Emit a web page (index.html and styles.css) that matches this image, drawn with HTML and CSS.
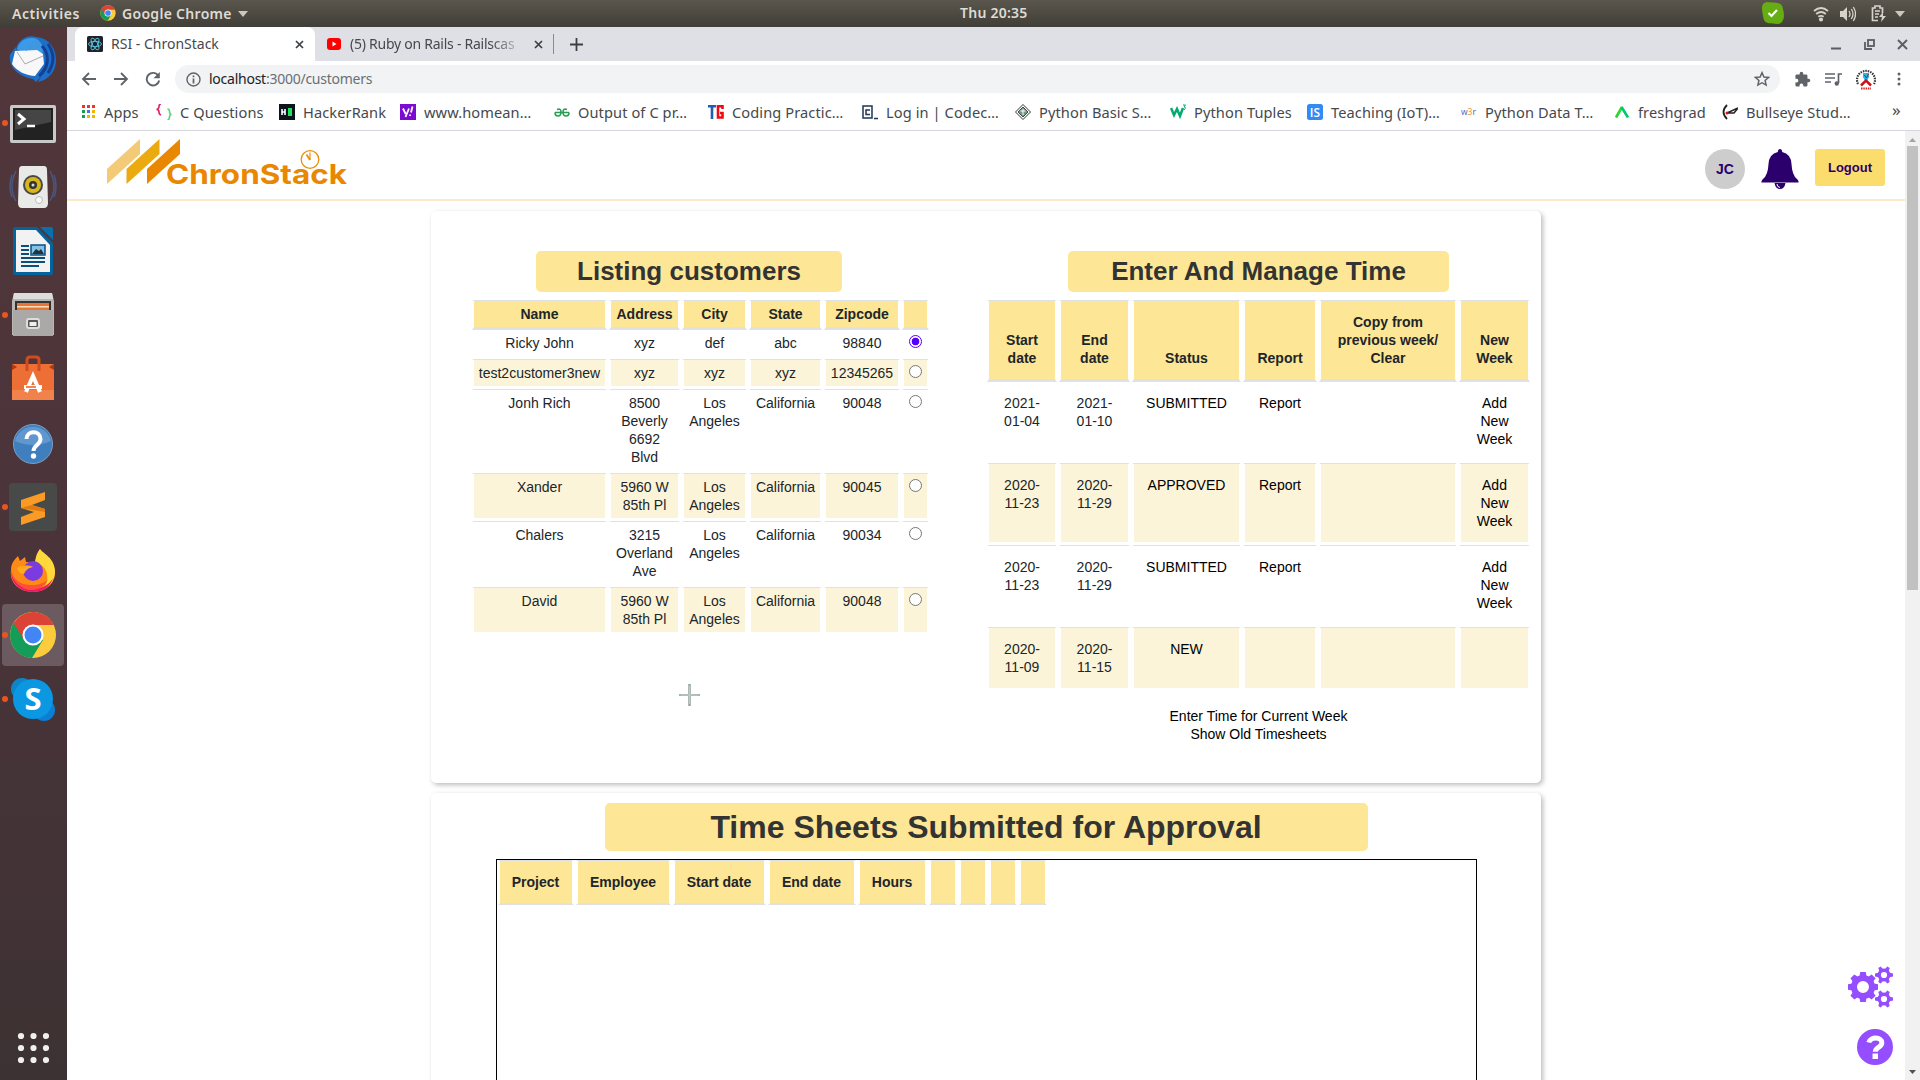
FILE: index.html
```html
<!DOCTYPE html>
<html lang="en">
<head>
<meta charset="utf-8">
<title>RSI - ChronStack</title>
<link rel="stylesheet" href="styles.css">
</head>
<body>
<header class="topbar">
  <span class="activities">Activities</span>
  <svg class="tb-chrome" width="16" height="16" viewBox="0 0 48 48"><use href="#chrome"/></svg>
  <span class="appname">Google Chrome</span>
  <svg class="tb-caret" width="10" height="6"><path d="M0 0h10L5 6z" fill="#c9c7c0"/></svg>
  <span class="clock">Thu 20:35</span>
  <div class="tray">
    <svg width="22" height="27" viewBox="0 0 22 27"><path d="M5 2C12 3 20 1 21 9c2 7 1 14-5 15C8 23 2 25 1 16 0 10-2 3 5 2z" fill="#65ad12"/><path d="M6.500 13l3 3 5.500-6" fill="none" stroke="#fff" stroke-width="2.200"/></svg>
    <svg class="t-wifi" width="16" height="16" viewBox="0 0 16 16" fill="none" stroke="#d5d2cb" stroke-width="1.800"><path d="M1 5q7-6 14 0M3.200 8q4.800-4 9.600 0M5.300 10.800q2.700-2 5.400 0"/><circle cx="8" cy="13.500" r="1.200" fill="#d5d2cb"/></svg>
    <svg class="t-vol" width="16" height="16" viewBox="0 0 16 16"><path d="M0 5h3l4-4v14l-4-4H0z" fill="#d5d2cb"/><path d="M9 5q2 3 0 6M11.300 3q3.400 5 0 10M13.300 1q4.500 7 0 14" fill="none" stroke="#d5d2cb" stroke-width="1.300"/></svg>
    <svg class="t-bat" width="15" height="17" viewBox="0 0 15 17" fill="none" stroke="#d5d2cb" stroke-width="1.700"><path d="M7 15.500H1.500V3H4V1h5v2h2.500v5M4 6h5M4 9h4M4 12h3"/><path d="M12 7l-4 5h3l-1 5 5-6h-3z" fill="#d5d2cb" stroke="none"/></svg>
    <svg class="t-car" width="10" height="6"><path d="M0 0h10L5 6z" fill="#c9c7c0"/></svg>
  </div>
</header>

<div class="desktop">
<nav class="dock">
  <div class="app"><svg viewBox="0 0 48 48"><path d="M7 16C7 6 18-1 27 2c13 1 20 11 20 23 0 12-8 20-18 22l3-5-5 5-3-3C10 42-1 32 1 20c1-2 3-5 6-8z" fill="#1d6fc7"/><path d="M18 4c8-3 13 1 15 6 2 8 0 15-6 20L8 14C10 8 14 4 18 4z" fill="#3f97e0"/><path d="M33 11c8 8 7 22-3 30M39 9c7 10 6 20 0 29" stroke="#153f92" stroke-width="3" fill="none"/><path d="M6 16l22-1 6 4 1 10-9 12C18 41 7 36 3 29z" fill="#f8f8fa"/><path d="M8 17l8 12 18-8" fill="none" stroke="#aaa" stroke-width="1"/><path d="M10 12c3-9 14-12 20-6-8-1-11 4-12 10z" fill="#3b9be8"/></svg></div>
  <div class="app on"><svg viewBox="0 0 48 48"><rect x="1" y="6" width="46" height="38" rx="2" fill="#c9c9c7"/><rect x="4" y="9" width="40" height="32" fill="#222"/><path d="M6 11h36v12L6 31z" fill="#454545"/><path d="M9 15l6 5-6 5" stroke="#fff" stroke-width="3" fill="none"/><path d="M18 27h8" stroke="#fff" stroke-width="2.500"/></svg></div>
  <div class="app"><svg viewBox="0 0 48 48"><path d="M7 8q-8 16 0 30M3 12q-4 12 0 22M41 8q8 16 0 30M45 12q4 12 0 22" stroke="#4b5680" stroke-width="1.500" fill="none"/><path d="M13 3h22q3 0 3 4l1 33q0 5-4 5H13q-4 0-4-5l1-33q0-4 3-4z" fill="#e9e9e7"/><circle cx="24" cy="22" r="10" fill="#48484a"/><circle cx="24" cy="22" r="8" fill="#d6b71b"/><circle cx="24" cy="22" r="4" fill="#333"/><circle cx="24" cy="22" r="1.500" fill="#ddd"/><circle cx="30" cy="37" r="3.500" fill="#f8f8f8" stroke="#bbb"/></svg></div>
  <div class="app"><svg viewBox="0 0 48 48"><path d="M6 0h22l16 16v30q0 2-2 2H6q-2 0-2-2V2q0-2 2-2z" fill="#05639c"/><path d="M31 0h11q2 0 2 2v11z" fill="#0a6fae"/><path d="M7 3h20l14 15v27H7z" fill="#f2f2f2"/><path d="M12 19h8M12 23h8M12 27h8M12 31h24M12 35h24M12 39h18" stroke="#0b4f7d" stroke-width="2"/><path d="M22 18h14v10H22z" fill="#81c3e8" stroke="#0b4f7d" stroke-width="1.500"/><path d="M23 27l4-5 3 2 2-2 3 5z" fill="#263238"/></svg></div>
  <div class="app on"><svg viewBox="0 0 48 48"><path d="M5 2h38l2 8v34H3V10z" fill="#b7b7b5"/><path d="M5 2h38l1 6H4z" fill="#ddd"/><path d="M6 10h36v10H6z" fill="#333"/><path d="M8 12h32v7H8z" fill="#e87533"/><path d="M8 15h32v1.500H8z" fill="#fbe0c0"/><path d="M4 19h40v26H4z" fill="#aaa9a8"/><rect x="18" y="28" width="12" height="9" rx="2" fill="#555" stroke="#ddd" stroke-width="2"/><rect x="20.500" y="31" width="7" height="4" fill="#eee"/></svg></div>
  <div class="app"><svg viewBox="0 0 48 48"><path d="M18 16V5q0-3 3-3h6q3 0 3 3v11" fill="none" stroke="#cf4d1c" stroke-width="3"/><path d="M3 9h42v36H3z" fill="#ee6f35"/><path d="M3 35h42v10H3z" fill="#f2824c"/><path d="M3 9l5 3-5 3M45 9l-5 3 5 3z" fill="#a83c12"/><path d="M18 16V9M30 16V9" stroke="#cf4d1c" stroke-width="3"/><path d="M17 37l7-16 7 16" fill="none" stroke="#fff" stroke-width="4"/><path d="M15 32h18" stroke="#fff" stroke-width="4"/><path d="M17 32h10" stroke="#ee5b20" stroke-width="1.500"/></svg></div>
  <div class="app"><svg viewBox="0 0 48 48"><circle cx="24" cy="25" r="19.500" fill="#3f7fbe" stroke="#7d9ec4"/><path d="M6 22a18.500 18.500 0 0 1 36 0q-18 8-36 0z" fill="#6097cf"/><path d="M17.500 20c0-9 14-9 14 0 0 6-7 6-7 12" fill="none" stroke="#fff" stroke-width="4"/><circle cx="24.500" cy="37" r="2.700" fill="#fff"/></svg></div>
  <div class="app on"><svg viewBox="0 0 48 48"><rect width="48" height="48" rx="4" fill="#484a49"/><path d="M12 17l24-8v8l-13 5 13 4v8l-24 8v-8l13-5-13-4z" fill="#fb9a24"/><path d="M12 25l11-3 13 4v3z" fill="#e07b12"/></svg></div>
  <div class="app"><svg viewBox="0 0 48 48"><path d="M31 2c3 5 14 8 15 22 1 12-9 21-22 21S0 36 2 23C2 16 6 12 9 9l2 5 5-4 1 5h9c2-6 2-9 5-13z" fill="#ff8a16"/><path d="M31 2c3 5 14 8 15 22 0 8-4 14-10 17 5-13 2-22-10-26 1-6 2-9 5-13z" fill="#ffd83c"/><path d="M2 23c1 12 10 19 22 19 9 0 16-4 20-11-3 9-10 14-20 14S1 38 2 23z" fill="#f0186a"/><path d="M2 23c2 9 9 15 20 15 8 0 14-2 17-6-3 7-9 11-17 11S4 36 2 23z" fill="#ff4f38"/><circle cx="24" cy="24" r="10" fill="#7a3be0"/><path d="M8 21c5-3 11-3 16-1-5 1-7 3-9 7-3 0-6-2-7-6z" fill="#ffab1c"/></svg></div>
  <div class="app on active"><svg viewBox="0 0 48 48"><g id="chrome"><circle cx="24" cy="24" r="23" fill="#fccc3d"/><path d="M24 24L4.500 12A23 23 0 0 0 23 47l11-18z" fill="#149d58"/><path d="M24 14h20.800A23 23 0 0 0 4.500 12L14 27z" fill="#da4335"/><circle cx="24" cy="24" r="10.500" fill="#fff"/><circle cx="24" cy="24" r="8.500" fill="#4285f4"/></g></svg></div>
  <div class="app on"><svg viewBox="0 0 48 48"><circle cx="13" cy="14" r="11" fill="#0c86c9"/><circle cx="35" cy="35" r="11" fill="#0c7fd4"/><circle cx="24" cy="24" r="20" fill="#0b97e2"/><text x="24" y="35" text-anchor="middle" class="skype">S</text></svg></div>
  <svg class="grid9" width="32" height="32" viewBox="0 0 32 32" fill="#f0f0ef"><circle cx="4" cy="4" r="3.100"/><circle cx="16.500" cy="4" r="3.100"/><circle cx="29" cy="4" r="3.100"/><circle cx="4" cy="16" r="3.100"/><circle cx="16.500" cy="16" r="3.100"/><circle cx="29" cy="16" r="3.100"/><circle cx="4" cy="28" r="3.100"/><circle cx="16.500" cy="28" r="3.100"/><circle cx="29" cy="28" r="3.100"/></svg>
</nav>

<div class="browser">
  <div class="tabs">
    <div class="tab current">
      <svg width="16" height="16" viewBox="0 0 16 16"><rect width="16" height="16" rx="1.500" fill="#20232a"/><g fill="none" stroke="#61dafb" stroke-width=".8"><ellipse cx="8" cy="8" rx="6.500" ry="2.600"/><ellipse cx="8" cy="8" rx="6.500" ry="2.600" transform="rotate(60 8 8)"/><ellipse cx="8" cy="8" rx="6.500" ry="2.600" transform="rotate(120 8 8)"/></g></svg>
      <span class="tt">RSI - ChronStack</span>
      <svg class="x" width="9" height="9"><path d="M1 1l7 7M8 1L1 8" stroke="#3c4043" stroke-width="1.700"/></svg>
    </div>
    <div class="tab">
      <svg width="16" height="16" viewBox="0 0 16 16"><rect x="1" y="2" width="14" height="12" rx="3" fill="#f00"/><path d="M6.500 5.500v5l4-2.500z" fill="#fff"/></svg>
      <span class="tt fade">(5) Ruby on Rails - Railscas</span>
      <svg class="x" width="9" height="9"><path d="M1 1l7 7M8 1L1 8" stroke="#3c4043" stroke-width="1.700"/></svg>
    </div>
    <span class="tsep"></span>
    <svg class="plus" width="13" height="13"><path d="M6.500 0v13M0 6.500h13" stroke="#3c4043" stroke-width="1.800"/></svg>
    <div class="winctl">
      <svg width="11" height="11"><path d="M0 9.500h10" stroke="#5a5d61" stroke-width="2"/></svg>
      <svg width="11" height="11" fill="none" stroke="#5a5d61" stroke-width="1.800"><rect x="4" y="1" width="6" height="6"/><path d="M1 3v7h7"/></svg>
      <svg width="11" height="11"><path d="M1 1l9 9M10 1l-9 9" stroke="#5a5d61" stroke-width="1.900"/></svg>
    </div>
  </div>

  <div class="toolbar">
    <svg width="16" height="16" fill="none" stroke="#5f6368" stroke-width="1.800"><path d="M15 8H2M8 2L2 8l6 6"/></svg>
    <svg width="16" height="16" fill="none" stroke="#5f6368" stroke-width="1.800"><path d="M1 8h13M8 2l6 6-6 6"/></svg>
    <svg width="16" height="16" fill="none" stroke="#5f6368" stroke-width="1.900"><path d="M13.500 5A6.300 6.300 0 1 0 14.200 9.500"/><path d="M14.800 1v6.300H8.500z" fill="#5f6368" stroke="none"/></svg>
    <div class="omnibox">
      <svg width="15" height="15" fill="none" stroke="#5f6368" stroke-width="1.400"><circle cx="7.500" cy="7.500" r="6.500"/><path d="M7.500 6.500v5M7.500 3.500v1.700" stroke-width="1.700"/></svg>
      <span class="url"><b>localhost</b>:3000/customers</span>
      <svg class="star" width="16" height="16" viewBox="0 0 24 24" fill="none" stroke="#5f6368" stroke-width="2.200"><path d="M12 2.500l2.900 6.500 7 .6-5.300 4.700 1.600 6.900L12 17.600l-6.200 3.600 1.600-6.900-5.300-4.700 7-.6z"/></svg>
    </div>
    <div class="ext">
      <svg width="17" height="17" viewBox="0 0 24 24" fill="#5f6368"><path d="M20.500 11H19V7a2 2 0 0 0-2-2h-4V3.500a2.500 2.500 0 0 0-5 0V5H4a2 2 0 0 0-2 2v3.800h1.500a2.700 2.700 0 0 1 0 5.400H2V20a2 2 0 0 0 2 2h3.800v-1.500a2.700 2.700 0 0 1 5.400 0V22H17a2 2 0 0 0 2-2v-4h1.500a2.500 2.500 0 0 0 0-5z"/></svg>
      <svg width="17" height="15" fill="none" stroke="#5f6368" stroke-width="1.700"><path d="M0 2h10M0 6h10M0 10h6M13.500 11V2H17"/><circle cx="11.800" cy="11.500" r="2.200" fill="#5f6368" stroke="none"/></svg>
      <svg width="20" height="21" viewBox="0 0 20 21"><path d="M2 15A9 9 0 1 1 18 15" fill="none" stroke="#333" stroke-width="2.200" stroke-dasharray="1.500 1"/><path d="M7 4h6v4q-1 3-3 4-2-1-3-4z" fill="#29b6e8"/><path d="M8.500 6l2 3 2-4" stroke="#a01c30" fill="none"/><path d="M5 16.500l5-5 5 5" fill="none" stroke="#c81414" stroke-width="2.500"/><path d="M5 19.500h10" stroke="#d22" stroke-width="2" stroke-dasharray="1.500 .8"/></svg>
      <svg width="4" height="14" fill="#5f6368"><circle cx="2" cy="2" r="1.500"/><circle cx="2" cy="7" r="1.500"/><circle cx="2" cy="12" r="1.500"/></svg>
    </div>
  </div>

  <div class="bookmarks">
    <a><svg viewBox="0 0 16 16"><path d="M2 1h3v3H2zM7 1h3v3H7zM12 1h3v3h-3z" fill="#e33"/><path d="M2 6h3v3H2z" fill="#1a9b50"/><path d="M7 6h3v3H7z" fill="#3b78e7"/><path d="M12 6h3v3h-3zM7 11h3v3H7zM12 11h3v3h-3z" fill="#f5b400"/><path d="M2 11h3v3H2z" fill="#1a9b50"/></svg>Apps</a>
    <a><svg viewBox="0 0 16 16" fill="none" stroke-width="1.600"><path d="M5 0Q3 0 3 2.500T.5 5.500Q3 5.500 3 8t2 3" stroke="#e2236b"/><path d="M11.500 5q2 0 2 2.500t2 3q-2 0-2 2.500t-2 3" stroke="#63d27e"/></svg>C Questions</a>
    <a><svg viewBox="0 0 16 16"><path d="M0 0h16v16H0z" fill="#0e141e"/><path d="M3 5v6M6 5v6M3 8h3" stroke="#fff" stroke-width="1.600"/><path d="M9 4h4v8H9z" fill="#1ee45c"/></svg>HackerRank</a>
    <a><svg viewBox="0 0 16 16"><path d="M0 0h16v16H0z" fill="#7b0bd0"/><path d="M3 4.500l2.700 5.500M9 4.500L5.500 13M12.500 2.500l-1.500 6M10.300 10.500l-.4 1.500" stroke="#fff" stroke-width="1.800"/></svg>www.homean…</a>
    <a><svg viewBox="0 0 16 16" fill="none" stroke="#2a9d55" stroke-width="1.600"><path d="M1 8.500h14M3 5.500Q7 4 7 8t-3 4-3-3.500M13 5.500Q9 4 9 8t3 4 3-3.500"/></svg>Output of C pr…</a>
    <a><svg viewBox="0 0 16 16" fill="none" stroke-width="2.600"><path d="M0 2.300h8M4 2v13" stroke="#1f5fae"/><path d="M14.500 5V2.300H10v11.200h4.500V9H12" stroke="#f00b14"/></svg>Coding Practic…</a>
    <a><svg viewBox="0 0 16 16" fill="none" stroke="#1f3556" stroke-width="1.500"><path d="M1 2h9v12H1zM8 6H4v4.500h4M12 14.500h4"/></svg>Log in | Codec…</a>
    <a><svg viewBox="0 0 16 16" fill="none" stroke="#333"><path d="M8 .5L15.500 8 8 15.500.5 8z"/><path d="M8 3l5 5-5 5-5-5z" fill="#6d9c80" stroke="#445"/><path d="M5.500 7h5M8 5v6" stroke="#fff"/></svg>Python Basic S…</a>
    <a><svg viewBox="0 0 16 16" fill="none" stroke="#04aa6d"><path d="M1 4l3 7 3-6 3 7 3-8" stroke-width="2.500"/><path d="M13 1h2.500L14 3q3 0 0 3" stroke-width="1"/></svg>Python Tuples</a>
    <a><svg viewBox="0 0 16 16"><rect width="16" height="16" rx="2.500" fill="#338af3"/><text x="8" y="12.500" text-anchor="middle" class="ic-is">IS</text></svg>Teaching (IoT)…</a>
    <a><svg viewBox="0 0 16 16"><text x="0" y="11" class="ic-w3r" textLength="15" lengthAdjust="spacingAndGlyphs">w<tspan fill="#f28a22">3</tspan>r</text></svg>Python Data T…</a>
    <a><svg viewBox="0 0 16 16" fill="none" stroke-width="2.600"><path d="M2 13.500L8 3" stroke="#2bd62e"/><path d="M7.500 3L14 13.500" stroke="#00c875"/></svg>freshgrad</a>
    <a><svg viewBox="0 0 16 16" fill="none" stroke="#222"><path d="M5 1q-7 7 0 14" stroke-width="1.800"/><path d="M5 9l11-5-4 5H6" stroke-width="1.500"/><circle cx="5" cy="9" r="1.500" fill="#d11" stroke="none"/></svg>Bullseye Stud…</a>
    <span class="more">»</span>
  </div>

  <div class="viewport">
    <div class="page">
      <header class="site">
        <svg class="logo" width="244" height="60" viewBox="107 132 244 60">
          <path d="M107 169l33-30v15l-33 30z" fill="#f2ca78"/><path d="M126.500 169l33-30v15l-33 30z" fill="#ebaa10"/><path d="M147 169l33-30v15l-33 30z" fill="#e98700"/>
          <text x="166" y="184" textLength="181" lengthAdjust="spacingAndGlyphs" class="brand">ChronStack</text>
          <g fill="none" stroke="#e98f08"><circle cx="310" cy="159.500" r="8.800" stroke-width="1.300"/><path d="M310 160v-7.500" stroke-width="1.200"/><path d="M310 160l-3.500-5.500" stroke-width="1.800"/></g>
        </svg>
        <div class="user">
          <span class="avatar">JC</span>
          <svg class="bell" width="38" height="40" viewBox="0 0 38 40"><path d="M19 0q2 0 2.200 3Q30 5 30.500 15 31 26 36 30q2 2 1.500 3.500H.5Q0 32 2 30q5-4 5.500-15Q8 5 16.800 3 17 0 19 0zM13.500 34h11q-1 6-5.500 6t-5.500-6z" fill="#2c006c"/><path d="M16 35q0 3 3 3.500" stroke="#fff" fill="none"/></svg>
          <button class="logout">Logout</button>
        </div>
      </header>

      <main>
        <section class="card overview">
          <div class="col">
            <h2 class="w-customers">Listing customers</h2>
            <table class="grid customers">
              <colgroup><col class="c135"><col class="c71"><col class="c65"><col class="c73"><col class="c76"><col class="c27"></colgroup>
              <thead><tr><th>Name</th><th>Address</th><th>City</th><th>State</th><th>Zipcode</th><th></th></tr></thead>
              <tbody>
                <tr><td>Ricky John</td><td>xyz</td><td>def</td><td>abc</td><td>98840</td><td><input type="radio" name="c" checked></td></tr>
                <tr><td>test2customer3new</td><td>xyz</td><td>xyz</td><td>xyz</td><td>12345265</td><td><input type="radio" name="c"></td></tr>
                <tr><td>Jonh Rich</td><td>8500<br>Beverly<br>6692<br>Blvd</td><td>Los<br>Angeles</td><td>California</td><td>90048</td><td><input type="radio" name="c"></td></tr>
                <tr><td>Xander</td><td>5960 W<br>85th Pl</td><td>Los<br>Angeles</td><td>California</td><td>90045</td><td><input type="radio" name="c"></td></tr>
                <tr><td>Chalers</td><td>3215<br>Overland<br>Ave</td><td>Los<br>Angeles</td><td>California</td><td>90034</td><td><input type="radio" name="c"></td></tr>
                <tr><td>David</td><td>5960 W<br>85th Pl</td><td>Los<br>Angeles</td><td>California</td><td>90048</td><td><input type="radio" name="c"></td></tr>
              </tbody>
            </table>
          </div>
          <div class="col">
            <h2 class="w-time">Enter And Manage Time</h2>
            <table class="grid weeks">
              <colgroup><col class="c70"><col class="c71"><col class="c109"><col class="c74"><col class="c138"><col class="c71"></colgroup>
              <thead><tr><th>Start<br>date</th><th>End<br>date</th><th>Status</th><th>Report</th><th>Copy from<br>previous week/<br>Clear</th><th>New<br>Week</th></tr></thead>
              <tbody>
                <tr><td>2021-<br>01-04</td><td>2021-<br>01-10</td><td><a>SUBMITTED</a></td><td><a>Report</a></td><td></td><td><a>Add<br>New<br>Week</a></td></tr>
                <tr><td>2020-<br>11-23</td><td>2020-<br>11-29</td><td><a>APPROVED</a></td><td><a>Report</a></td><td></td><td><a>Add<br>New<br>Week</a></td></tr>
                <tr><td>2020-<br>11-23</td><td>2020-<br>11-29</td><td><a>SUBMITTED</a></td><td><a>Report</a></td><td></td><td><a>Add<br>New<br>Week</a></td></tr>
                <tr><td>2020-<br>11-09</td><td>2020-<br>11-15</td><td><a>NEW</a></td><td></td><td></td><td></td></tr>
              </tbody>
            </table>
            <div class="links"><a>Enter Time for Current Week</a><a>Show Old Timesheets</a></div>
          </div>
        </section>

        <section class="card approvals">
          <h1>Time Sheets Submitted for Approval</h1>
          <div class="sheetbox">
            <table class="grid sheets">
              <colgroup><col class="c76"><col class="c95"><col class="c93"><col class="c88"><col class="c69"><col class="c28"><col class="c28"><col class="c28"><col class="c28"></colgroup>
              <thead><tr><th>Project</th><th>Employee</th><th>Start date</th><th>End date</th><th>Hours</th><th></th><th></th><th></th><th></th></tr></thead>
            </table>
          </div>
        </section>
      </main>

      <div class="fabs">
        <svg width="46" height="44" viewBox="1848 965 46 44">
          <defs>
            <g id="big"><circle r="9" fill="none" stroke="#944dff" stroke-width="6"/><g fill="#944dff"><path id="t" d="M-3.500-10.500l.7-4.500h5.600l.7 4.500z"/><use href="#t" transform="rotate(45)"/><use href="#t" transform="rotate(90)"/><use href="#t" transform="rotate(135)"/><use href="#t" transform="rotate(180)"/><use href="#t" transform="rotate(225)"/><use href="#t" transform="rotate(270)"/><use href="#t" transform="rotate(315)"/></g></g>
            <g id="small"><circle r="4.800" fill="none" stroke="#944dff" stroke-width="3.400"/><g fill="#944dff"><path id="s" d="M5.500-2.200l3.500.8v2.800l-3.500.8z"/><use href="#s" transform="rotate(60)"/><use href="#s" transform="rotate(120)"/><use href="#s" transform="rotate(180)"/><use href="#s" transform="rotate(240)"/><use href="#s" transform="rotate(300)"/></g></g>
          </defs>
          <use href="#big" x="1863" y="987"/><use href="#small" x="1884" y="975"/><use href="#small" x="1884" y="999"/>
        </svg>
        <svg width="36" height="36" viewBox="0 0 36 36"><circle cx="18" cy="18" r="18" fill="#944dff"/><path d="M11.800 13.500c1.500-6 13-6 13 .2 0 5-6.500 4.300-6.500 9" fill="none" stroke="#fff" stroke-width="5"/><path d="M15.500 24.500h5.500V30h-5.500z" fill="#fff"/></svg>
      </div>
    </div>
    <div class="scrollbar">
      <svg width="7" height="4"><path d="M0 4h7L3.500 0z" fill="#a3a3a3"/></svg>
      <div class="thumb"></div>
      <svg class="down" width="7" height="4"><path d="M0 0h7L3.500 4z" fill="#505050"/></svg>
    </div>
  </div>
</div>
</div>
<svg class="cursor" width="21" height="22"><path d="M10.500 0v22" stroke="#9aa8a3" stroke-width="2.600"/><path d="M0 11h21" stroke="#a5b3ae" stroke-width="2"/><path d="M10.500 2v18M2 11h17" stroke="#c9d2ce" stroke-width=".8"/></svg>
</body>
</html>
```
FILE: styles.css
```css
* { box-sizing: border-box; }
body { margin: 0; width: 1920px; height: 1080px; overflow: hidden; display: flex; flex-direction: column; font: 14px/18px "Liberation Sans", Arial, sans-serif; color: #212529; background: #fff; }
svg { display: block; flex: none; }

/* Desktop top bar */
.topbar { height: 27px; flex: none; background: linear-gradient(#5a564d, #403e38); display: flex; align-items: center; color: #dfdbd2; font: 600 14px/27px "Noto Sans", sans-serif; position: relative; padding-left: 12px; }
.activities { width: 88px; letter-spacing: .55px; }
.appname { margin-left: 6px; width: 116px; letter-spacing: .3px; white-space: nowrap; }
.tb-chrome { margin-top: -1px; }
.clock { position: absolute; left: 960px; top: -1px; letter-spacing: .25px; }
.tray { margin-left: auto; display: flex; align-items: center; padding-right: 15px; }
.t-wifi { margin-left: 29px; }
.t-vol { margin-left: 11px; }
.t-bat { margin-left: 15px; }
.t-car { margin-left: 9px; }

/* Dock */
.desktop { flex: 1; display: flex; min-height: 0; }
.dock { width: 67px; flex: none; background: linear-gradient(#52373a, #4a343a 50%, #3d3233); display: flex; flex-direction: column; align-items: center; }
.app { width: 67px; height: 64px; display: flex; align-items: center; justify-content: center; position: relative; padding-right: 1px; }
.app svg { width: 48px; height: 48px; }
.app.active { width: 62px; height: 62px; margin: 1px 1px 1px 0; background: #6b5a5f; border-radius: 4px; }
.app.on::before { content: ""; position: absolute; left: 2px; top: 29px; width: 6px; height: 6px; border-radius: 50%; background: #e95420; }
.app.active::before { left: 0; top: 28px; }
.skype { font: 700 31px "Open Sans", sans-serif; fill: #fff; }
.grid9 { margin: auto 2px 16px 0; }

/* Browser chrome */
.browser { flex: 1; display: flex; flex-direction: column; min-width: 0; background: #fff; font-family: "Noto Sans", sans-serif; }
.tabs { height: 34px; flex: none; background: #dee0e6; display: flex; align-items: center; padding-left: 8px; }
.tab { display: flex; align-items: center; height: 34px; width: 238px; padding: 0 13px 0 12px; font-size: 14px; color: #45494d; }
.tab.current { width: 240px; padding-right: 11px; background: #fff; border-radius: 8px 8px 0 0; }
.tab:not(.current) { padding: 0 11px; }
.tt { margin-left: 8px; flex: 1; white-space: nowrap; overflow: hidden; letter-spacing: 0; }
.fade { flex: none; width: 176px; margin-right: 8px; letter-spacing: -.25px; -webkit-mask-image: linear-gradient(90deg, #000 80%, transparent); mask-image: linear-gradient(90deg, #000 80%, transparent); }
.tsep { width: 1px; height: 20px; background: #888b90; }
.plus { margin-left: 16px; }
.winctl { margin-left: auto; display: flex; gap: 22px; padding-right: 12px; }
.toolbar { height: 36px; flex: none; display: flex; align-items: center; padding-left: 14px; gap: 16px; }
.omnibox { width: 1605px; height: 28px; border-radius: 14px; background: #f1f3f4; margin-left: -2px; display: flex; align-items: center; padding: 0 10px 0 11px; }
.url { margin-left: 8px; font-size: 14px; color: #6b6f74; letter-spacing: -.25px; }
.url b { font-weight: 400; color: #202124; }
.star { margin-left: auto; }
.ext { display: flex; align-items: center; gap: 14px; margin-left: -2px; }
.ext svg:last-child { margin-left: 7px; }
.bookmarks { height: 34px; flex: none; border-bottom: 1px solid #d6d7dc; display: grid; grid-template-columns: 76px 123px 121px 154px 154px 154px 153px 155px 137px 154px 153px 108px 170px auto; justify-content: start; align-items: center; padding: 0 0 4px 13px; font-size: 14.600px; color: #45494d; }
.bookmarks a { display: flex; align-items: center; gap: 8px; white-space: nowrap; letter-spacing: .1px; }
.bookmarks a svg { width: 16px; height: 16px; }
.ic-is { font: 600 12px "Open Sans", sans-serif; fill: #fff; letter-spacing: 0; }
.ic-w3r { font: 400 9px "Open Sans", sans-serif; fill: #4a5bb5; letter-spacing: 0; }
.more { font-size: 17px; margin-top: -3px; }

/* Page */
.viewport { flex: 1; min-height: 0; display: flex; font-family: "Liberation Sans", Arial, sans-serif; }
.page { flex: 1; min-width: 0; display: flex; flex-direction: column; position: relative; overflow: hidden; }
.site { height: 70px; flex: none; border-bottom: 2px solid #fdebc8; display: flex; align-items: center; padding: 0 20px 0 40px; }
.logo { margin-top: -6px; overflow: visible; }
.brand { font: 700 27.500px Inter, sans-serif; fill: #e98700; }
.user { margin-left: auto; display: flex; align-items: flex-start; height: 40px; margin-top: 8px; }
.avatar { width: 40px; height: 40px; border-radius: 50%; background: #cdcdcd; color: #2c006c; font-weight: 700; line-height: 40px; text-align: center; }
.bell { margin: 0 16px; }
.logout { width: 70px; height: 37px; border: 0; border-radius: 3px; background: #fbdd6e; color: #2c006c; font: 700 13px "Liberation Sans", Arial, sans-serif; padding: 0; }
main { flex: 1; min-height: 0; padding-top: 10px; display: flex; flex-direction: column; align-items: center; gap: 10px; }
.card { width: 1110px; flex: none; border-radius: 5px; background: #fff; box-shadow: 2px 2px 5px rgba(0, 0, 0, .27); }
.overview { height: 572px; padding-top: 40px; display: grid; grid-template-columns: 516px 565px; justify-content: space-between; }
.col { display: flex; flex-direction: column; align-items: center; }
h1, h2 { margin: 0 auto 8px; background: #fde796; color: #333; border-radius: 5px; text-align: center; font-weight: 700; }
h2 { font-size: 26px; line-height: 41px; height: 41px; }
h1 { font-size: 32px; line-height: 48px; height: 48px; width: 763px; }
.w-customers { width: 306px; }
.w-time { width: 381px; }
.grid { table-layout: fixed; border-collapse: separate; border-spacing: 2px 0; text-align: center; white-space: nowrap; }
.grid th, .grid td { padding: 12px 0; border: solid #fff; border-width: 1px 2px 3px; border-top-color: #dee2e6; vertical-align: top; line-height: 18px; }
.grid th { background: #fde796; border-bottom-color: #dee2e6; vertical-align: bottom; }
.grid tbody tr:first-child td { border-top-width: 0; }
.grid tbody tr:nth-child(even) td { background: #fcf4d8; }
.grid a { color: #000; }
.customers { width: 461px; align-self: flex-start; margin-left: 39px; }
.customers th, .customers td { padding: 4px 0; }
.customers input { appearance: none; display: block; width: 13px; height: 13px; margin: 1px auto 0; border: 1px solid #767676; border-radius: 50%; background: #fff; }
.customers input:checked { border-color: #50f; background: radial-gradient(circle, #50f 3.500px, #fff 4.200px); }
.weeks { width: 547px; }
.links { display: flex; flex-direction: column; margin-top: 16px; color: #000; text-align: center; }
.approvals { height: 400px; padding-top: 10px; }
.sheetbox { width: 981px; height: 400px; margin: 0 auto; border: 1px solid #000; }
.sheets { width: 553px; margin-left: -1px; }
.sheets th { border-bottom-width: 2px; }
.c27 { width: 27px; } .c28 { width: 28px; } .c65 { width: 65px; } .c69 { width: 69px; } .c70 { width: 70px; } .c71 { width: 71px; }
.c73 { width: 73px; } .c74 { width: 74px; } .c76 { width: 76px; } .c88 { width: 88px; } .c93 { width: 93px; } .c95 { width: 95px; }
.c109 { width: 109px; } .c135 { width: 135px; } .c138 { width: 138px; }

/* Floating actions, scrollbar and pointer */
.fabs { position: absolute; right: 11px; bottom: 15px; display: flex; flex-direction: column; align-items: flex-end; gap: 20px; }
.fabs svg:last-child { margin-right: 1px; }
.scrollbar { width: 15px; background: #f1f1f1; display: flex; flex-direction: column; align-items: center; padding: 7px 0 6px; }
.thumb { width: 11px; height: 444px; margin-top: 4px; background: #c1c1c1; }
.down { margin-top: auto; }
.cursor { position: absolute; left: 679px; top: 684px; }
```
